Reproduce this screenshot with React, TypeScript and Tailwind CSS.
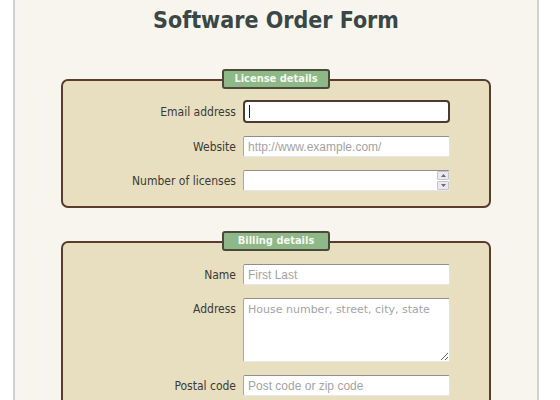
import type { ReactNode } from "react"

const labelCls =
  "text-right text-[12px] text-[#3a3a36] leading-none pr-[7px] font-['DejaVu_Sans_Condensed','DejaVu_Sans',sans-serif]"
const inputCls =
  "block w-[207px] h-[21px] bg-white border border-t-[#8e8e8e] border-l-[#a8a8a8] border-r-[#e2e2e2] border-b-[#e8e8e8] rounded-[2px] px-[4px] text-[12px] text-[#333] outline-none placeholder:text-[#a4a4a4] font-['Liberation_Sans',Arial,sans-serif]"

function Fieldset({ title, children }: { title: string; children: ReactNode }) {
  return (
    <div className="relative mx-[46px] rounded-[7px] border-2 border-[#5a3b2e] bg-[#e8dfc0]">
      <div className="absolute left-1/2 top-[-12px] -translate-x-1/2 w-[108px] h-[20px] rounded-[3px] border-2 border-[#4b4a3a] bg-[#8eb887] flex items-center justify-center text-[11px] font-bold text-[#f6f8f2] font-['DejaVu_Sans_Condensed','DejaVu_Sans',sans-serif]">
        {title}
      </div>
      {children}
    </div>
  )
}

function Row({ label, children, top = false }: { label: string; children: ReactNode; top?: boolean }) {
  return (
    <div className={`grid grid-cols-[180px_207px] ${top ? "items-start" : "items-center"}`}>
      <span className={`${labelCls} ${top ? "pt-[5px]" : ""}`}>{label}</span>
      {children}
    </div>
  )
}

export default function App() {
  return (
    <div className="min-h-screen bg-white font-['DejaVu_Sans',Verdana,sans-serif]">
      <div className="ml-[13px] w-[526px] h-[400px] overflow-hidden border-x-2 border-[#d0d0cc] bg-[#f8f5ee]">
        <h1 className="pt-[5px] text-center text-[23px] font-bold text-[#3a4746] leading-[30px] font-['DejaVu_Sans_Condensed','DejaVu_Sans',sans-serif]">
          Software Order Form
        </h1>

        <div className="mt-[44px]">
          <Fieldset title="License details">
            <div className="flex flex-col gap-[13px] pt-[19px] pb-[15px]">
              <Row label="Email address">
                <div className="relative w-[207px]">
                  <input className="block w-[207px] h-[23px] bg-white border-2 border-[#4a3a30] rounded-[4px] px-[4px] text-[12px] outline-none" />
                  {/* caret of the focused field */}
                  <span className="absolute left-[6px] top-[5px] h-[13px] w-px bg-[#222]" />
                </div>
              </Row>
              <Row label="Website">
                <input className={inputCls} placeholder="http://www.example.com/" />
              </Row>
              <Row label="Number of licenses">
                <div className="relative w-[207px]">
                  <input className={inputCls} />
                  <div className="absolute right-0 top-0 flex h-[21px] w-[14px] flex-col gap-[1px] p-[1px]">
                    <div className="flex flex-1 items-center justify-center rounded-[1px] border border-[#c4c4cc] bg-[#e9e9ef]">
                      <svg width="5" height="3" viewBox="0 0 5 3"><path d="M0 3 L2.5 0 L5 3 Z" fill="#6a6a78" /></svg>
                    </div>
                    <div className="flex flex-1 items-center justify-center rounded-[1px] border border-[#c4c4cc] bg-[#e9e9ef]">
                      <svg width="5" height="3" viewBox="0 0 5 3"><path d="M0 0 L2.5 3 L5 0 Z" fill="#6a6a78" /></svg>
                    </div>
                  </div>
                </div>
              </Row>
            </div>
          </Fieldset>
        </div>

        <div className="mt-[33px]">
          <Fieldset title="Billing details">
            <div className="flex flex-col gap-[13px] pt-[21px] pb-[15px]">
              <Row label="Name">
                <input className={inputCls} placeholder="First Last" />
              </Row>
              <Row label="Address" top>
                <textarea
                  className="block w-[207px] h-[64px] bg-white border border-t-[#8e8e8e] border-l-[#a8a8a8] border-r-[#e2e2e2] border-b-[#e8e8e8] rounded-[2px] px-[4px] py-[3px] text-[11px] text-[#333] outline-none placeholder:text-[#a4a4a4] font-['DejaVu_Sans',sans-serif]"
                  placeholder="House number, street, city, state"
                />
              </Row>
              <Row label="Postal code">
                <input className={inputCls} placeholder="Post code or zip code" />
              </Row>
            </div>
          </Fieldset>
        </div>
      </div>
    </div>
  )
}
